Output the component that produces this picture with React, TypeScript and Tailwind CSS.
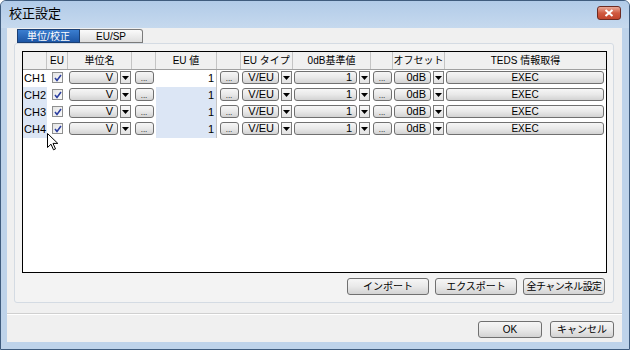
import type { ReactNode } from "react";

const font = "font-['Liberation_Sans','Noto_Sans_CJK_JP',sans-serif]";
const cols = "grid grid-cols-[24px_21px_64px_24px_61px_24px_52px_78px_22px_52px_161px]";
const btn =
  "border border-[#707070] rounded-[3px] bg-linear-to-b from-[#f6f6f6] via-[#e9e9e9] to-[#d3d3d3] flex items-center text-black";

const headers = ["", "EU", "単位名", "", "EU 値", "", "EU タイプ", "0dB基準値", "", "オフセット", "TEDS 情報取得"];
const rows = ["CH1", "CH2", "CH3", "CH4"];

function Arrow() {
  return (
    <div className="w-[11px] h-[13px] border border-[#7a7a7a] bg-linear-to-b from-[#fafafa] to-[#e2e2e2] flex items-center justify-center">
      <svg width="7" height="4" viewBox="0 0 7 4">
        <path d="M0 0h7L3.5 4z" fill="#000" />
      </svg>
    </div>
  );
}

function Combo({ value }: { value: string }) {
  return (
    <div className="flex gap-[2px] px-px pt-px">
      <div className={`${btn} flex-1 h-[13px] justify-end pr-[4px] text-[11px] leading-none`}>{value}</div>
      <Arrow />
    </div>
  );
}

function Dots() {
  return (
    <div className="pt-px flex justify-center">
      <div className={`${btn} w-[19px] h-[13px] justify-center text-[8px] leading-none pt-[3px]`}>...</div>
    </div>
  );
}

function Check() {
  return (
    <div className="w-[11px] h-[11px] border border-[#8e8f8f] bg-linear-to-br from-[#e4e4e4] to-[#fbfbfb] flex items-center justify-center">
      <svg width="8" height="8" viewBox="0 0 8 8">
        <path d="M1 4l2 2.5L7 1" fill="none" stroke="#2c3fa0" strokeWidth="1.6" />
      </svg>
    </div>
  );
}

function Button({ children, w }: { children: ReactNode; w: string }) {
  return <div className={`${btn} ${w} h-[17px] justify-center text-[10px]`}>{children}</div>;
}

export default function App() {
  return (
    <div
      className={`${font} relative w-[630px] h-[350px] bg-[#bed3ea] border border-[#3f5c7e] rounded-t-[6px] flex flex-col overflow-hidden`}
    >
      {/* title bar */}
      <div className="h-[27px] flex items-center justify-between pl-[8px] pr-[8px] bg-linear-to-b from-[#b1cbe8] to-[#c6d9ee]">
        <span className="text-[13px] text-black mt-[-2px]">校正設定</span>
        <div className="w-[24px] h-[14px] mt-[-4px] rounded-[3px] border border-[#6d2b22] bg-linear-to-b from-[#e8a898] via-[#d05a40] to-[#c2442c] flex items-center justify-center">
          <svg width="10" height="8" viewBox="0 0 10 8">
            <path d="M1.5 1l7 6M8.5 1l-7 6" stroke="#fff" strokeWidth="2" />
          </svg>
        </div>
      </div>

      {/* client */}
      <div className="ml-[6px] w-[615px] h-[314px] bg-[#f0f0f0] flex flex-col">
        {/* tabs */}
        <div className="mt-px ml-[10px] flex h-[14px]">
          <div className="w-[63px] h-[14px] border border-[#1b3f73] bg-linear-to-b from-[#3b7ed0] to-[#1d56a6] text-white text-[10px] flex items-center justify-center">
            単位/校正
          </div>
          <div className="w-[63px] h-[14px] border border-[#7a7a7a] border-l-0 rounded-tr-[3px] bg-linear-to-b from-[#fbfbfb] to-[#dedede] text-black text-[10px] flex items-center justify-center">
            EU/SP
          </div>
        </div>

        {/* panel */}
        <div className="ml-[7px] w-[600px] h-[260px] border border-[#d4dbe3] rounded-[3px] bg-[#f3f3f3] pt-[7px] pl-[7px]">
          <div className="w-[585px] h-[222px] border border-black bg-white">
            <div className={`${cols} h-[18px] bg-[#f0f0f0] border-b border-[#a0a0a0]`}>
              {headers.map((h, i) => (
                <div
                  key={i}
                  className="border-r border-[#c4c4c4] last:border-r-0 flex items-center justify-center text-[10px] text-black"
                >
                  {h}
                </div>
              ))}
            </div>
            {rows.map((ch, r) => {
              const tint = r === 0 ? "bg-white" : "bg-[#dce6f5]";
              return (
                <div key={ch} className={`${cols} h-[17px]`}>
                  <div className={`${tint} pl-[1px] pt-[2px] text-[11px] leading-[13px] text-black`}>{ch}</div>
                  <div className="pl-[5px] pt-[2px]">
                    <Check />
                  </div>
                  <Combo value="V" />
                  <Dots />
                  <div
                    className={`${tint} border-r border-[#c4c4c4] pr-[2px] pt-[2px] text-right text-[11px] leading-[13px] text-black`}
                  >
                    1
                  </div>
                  <Dots />
                  <Combo value="V/EU" />
                  <Combo value="1" />
                  <Dots />
                  <Combo value="0dB" />
                  <div className="pt-px pl-px pr-[2px]">
                    <div className={`${btn} h-[13px] justify-center text-[10px] leading-none`}>EXEC</div>
                  </div>
                </div>
              );
            })}
          </div>
          <div className="mt-[5px] pr-[8px] flex justify-end gap-[6px]">
            <Button w="w-[82px]">インポート</Button>
            <Button w="w-[82px]">エクスポート</Button>
            <Button w="w-[82px]">
              <span className="tracking-[-0.6px]">全チャンネル設定</span>
            </Button>
          </div>
        </div>

        {/* separator */}
        <div className="mt-[10px] h-[2px] border-t border-[#d0d0d0] border-b border-b-white" />

        <div className="mt-[6px] pr-[8px] flex justify-end gap-[8px]">
          <Button w="w-[64px]">OK</Button>
          <Button w="w-[64px]">キャンセル</Button>
        </div>
      </div>

      {/* mouse pointer */}
      <svg className="absolute left-[46px] top-[132px]" width="12" height="18" viewBox="0 0 12 18">
        <path d="M0.5 0.5v14l3.5-3.3 2.5 5.6 2-0.9-2.5-5.5h4.8z" fill="#fff" stroke="#000" strokeWidth="1" />
      </svg>
    </div>
  );
}
